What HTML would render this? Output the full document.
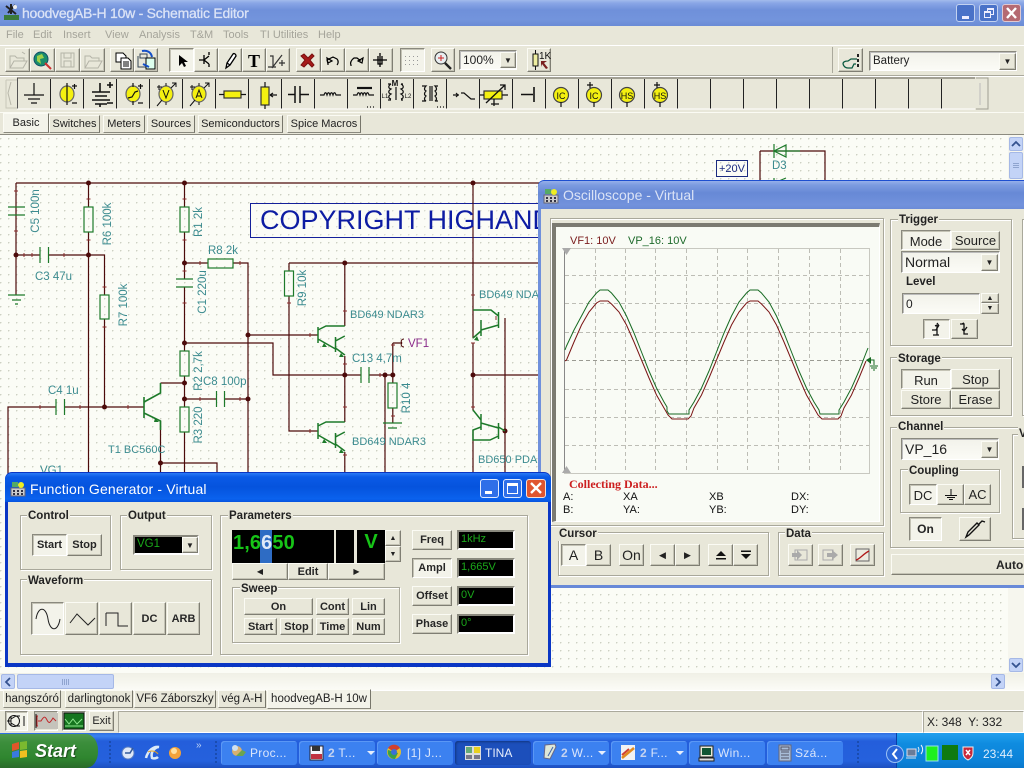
<!DOCTYPE html>
<html><head><meta charset="utf-8"><title>Schematic Editor</title>
<style>
html,body{margin:0;padding:0;width:1024px;height:768px;overflow:hidden;background:#e8e7d9}
body{position:relative;font:12px "Liberation Sans",sans-serif;color:#111}
div,span{position:absolute;box-sizing:border-box}
svg{position:absolute;overflow:visible}
svg text{font-family:"Liberation Sans",sans-serif}
.b{background:#e8e7d9;border:1px solid;border-color:#fbfbf4 #7f7e73 #7f7e73 #fbfbf4;box-shadow:inset -1px -1px 0 #c4c3b5;display:flex;align-items:center;justify-content:center;white-space:nowrap;font-size:12px;color:#222}
.p{background:#f3f3ea;border-color:#8a897e #fff #fff #8a897e;box-shadow:inset 1px 1px 0 #c4c3b5}
.bd{font-weight:bold;font-size:11px;color:#262626}
.g{border:1px solid #a9a89b;box-shadow:1px 1px 0 #fff,inset 1px 1px 0 #fff}
.l{background:#e8e7d9;font-weight:bold;font-size:11.5px;padding:0 1px;line-height:14px;white-space:nowrap;color:#222}
.m{color:#a5a49a;font-size:11px;top:28px;line-height:14px;white-space:nowrap}
.t{background:#e8e7d9;border:1px solid;border-color:#fbfbf4 #77766b #8a897e #fbfbf4;display:flex;align-items:center;justify-content:center;white-space:nowrap;font-size:11px;height:20px;color:#222}
.d{background:#000;border:2px solid;border-color:#8a897e #fff #fff #8a897e;color:#1aa81a;font-size:11px;line-height:15px;padding-left:2px;white-space:nowrap}
.c{background:linear-gradient(#f2f2ea,#fbfbf6);border:1px solid;border-color:#8a897e #fff #fff #8a897e;box-shadow:inset 1px 1px 0 #bbb;font-size:14px;padding-left:3px;white-space:nowrap;display:flex;align-items:center;color:#222}
.tb{height:24px;top:741px;background:#3c81f0;border-radius:3px;color:#dbe6fb;font-size:12px;line-height:24px;white-space:nowrap;box-shadow:inset 1px 1px 0 #5a97f5;letter-spacing:.3px}
.sc{background:#c3d3f7;border:1px solid #a5b8e6;border-radius:2px;display:flex;align-items:center;justify-content:center}
</style></head><body>

<!-- title bar -->
<div style="left:0;top:0;width:1024px;height:26px;background:linear-gradient(#a3bbec 0,#8aa6e6 3px,#6f90da 10px,#7394dc 20px,#6a8bd6 26px)"></div>
<svg style="left:3px;top:3px" width="18" height="18" viewBox="0 0 18 18"><rect x="1" y="12" width="15" height="5" fill="#3a7a3a"/><path d="M3 3l10 8M12 2L5 10M8 1v10" stroke="#222" stroke-width="2" fill="none"/><circle cx="12" cy="4" r="2" fill="#eee"/></svg>
<div style="left:22px;top:5px;color:#dbe3f6;font-size:14px;letter-spacing:-.25px;line-height:17px;white-space:nowrap;-webkit-text-stroke:.3px #dbe3f6">hoodvegAB-H 10w - Schematic Editor</div>
<div style="left:956px;top:4px;width:19px;height:18px;border-radius:3px;background:#4a72c8;border:1px solid #c3d2f0"><span style="left:5px;top:11px;width:7px;height:3px;background:#eef"></span></div>
<div style="left:979px;top:4px;width:19px;height:18px;border-radius:3px;background:#4a72c8;border:1px solid #c3d2f0"><span style="left:7px;top:3px;width:7px;height:7px;border:1px solid #eef;border-top-width:2px"></span><span style="left:4px;top:6px;width:7px;height:7px;border:1px solid #eef;border-top-width:2px;background:#4a72c8"></span></div>
<div style="left:1002px;top:4px;width:19px;height:18px;border-radius:3px;background:#b56a72;border:1px solid #e0c8d0"><svg width="17" height="16"><path d="M4 3l9 10M13 3l-9 10" stroke="#fff" stroke-width="2.4"/></svg></div>

<!-- menu -->
<span class="m" style="left:6px">File</span><span class="m" style="left:33px">Edit</span><span class="m" style="left:63px">Insert</span><span class="m" style="left:105px">View</span><span class="m" style="left:139px">Analysis</span><span class="m" style="left:190px">T&amp;M</span><span class="m" style="left:223px">Tools</span><span class="m" style="left:260px">TI Utilities</span><span class="m" style="left:318px">Help</span>
<div style="left:0;top:45px;width:1024px;height:1px;background:#fff"></div>
<div style="left:0;top:75px;width:1024px;height:1px;background:#aaa99c"></div>
<div style="left:0;top:76px;width:1024px;height:1px;background:#fff"></div>
<div style="left:0;top:112px;width:1024px;height:1px;background:#fbfbf4"></div>
<div style="left:0;top:134px;width:1024px;height:1px;background:#8c8b80"></div>

<!-- toolbar 1 buttons -->
<div class="b" style="left:5px;top:48px;width:25px;height:24px"></div><div class="b" style="left:30px;top:48px;width:25px;height:24px"></div><div class="b" style="left:55px;top:48px;width:25px;height:24px"></div><div class="b" style="left:80px;top:48px;width:25px;height:24px"></div>
<div class="b" style="left:110px;top:48px;width:24px;height:24px"></div><div class="b" style="left:134px;top:48px;width:24px;height:24px"></div>
<div class="b p" style="left:169px;top:48px;width:25px;height:24px"></div><div class="b" style="left:194px;top:48px;width:24px;height:24px"></div><div class="b" style="left:218px;top:48px;width:24px;height:24px"></div><div class="b" style="left:242px;top:48px;width:24px;height:24px"></div><div class="b" style="left:266px;top:48px;width:24px;height:24px"></div>
<div class="b" style="left:296px;top:48px;width:25px;height:24px"></div><div class="b" style="left:321px;top:48px;width:24px;height:24px"></div><div class="b" style="left:345px;top:48px;width:24px;height:24px"></div><div class="b" style="left:369px;top:48px;width:24px;height:24px"></div>
<div class="b p" style="left:400px;top:48px;width:25px;height:24px"></div>
<div class="b" style="left:431px;top:48px;width:24px;height:24px"></div>
<div class="c" style="left:459px;top:50px;width:58px;height:20px;font-size:12px">100%</div>
<div class="b" style="left:500px;top:52px;width:16px;height:16px;font-size:8px">&#9660;</div>
<div class="b" style="left:527px;top:48px;width:24px;height:24px"></div>
<div style="left:832px;top:47px;width:1px;height:26px;background:#aaa99c"></div>
<div class="b" style="left:838px;top:48px;width:25px;height:24px"></div>
<div class="c" style="left:869px;top:51px;width:148px;height:20px;font-size:11.5px">Battery</div>
<div class="b" style="left:999px;top:53px;width:17px;height:17px;font-size:8px">&#9660;</div>

<!-- toolbar 1 & 2 icons -->
<svg style="left:0;top:0" width="1024" height="135" viewBox="0 0 1024 135" fill="none">
<g stroke="#b5b4a8"><path d="M10 68V56h5l2 2h7v3M10 68l4-7h13l-4 7zM22 52l3 2"/><rect x="61" y="53" width="13" height="14"/><rect x="64" y="53" width="7" height="5"/><rect x="64" y="61" width="7" height="6"/><path d="M85 68V56h5l2 2h7v3M85 68l4-7h13l-4 7z"/></g>
<circle cx="41" cy="59" r="7" fill="#1b8d6a" stroke="#0f4f6b"/><path d="M37 56l5-2 2 4-4 1 1 5-4-3zM44 60l2 2" fill="#9fd14a"/><path d="M45 63l6 6" stroke="#c33" stroke-width="2"/>
<g stroke="#000"><path d="M116 53h7l3 3v6h-10z" fill="#fff"/><path d="M121 58h7l3 3v8h-10z" fill="#fff"/><path d="M123 62h6M123 64h6M123 66h6"/>
<path d="M140 54h7v4h-7zM138 56v11h8" stroke="#345"/><rect x="146" y="58" width="9" height="11" fill="#dfe"/></g><path d="M142 51c5-1 9 1 10 6M143 64l6 3" stroke="#1450c8" stroke-width="2"/>
<path d="M179 55v11l3-3 2 4 2-1-2-4h4z" fill="#000"/>
<path d="M199 60h5M204 55v9M204 60l5-4M204 60l5 4M209 52v3M209 64v3" stroke="#000" stroke-width="1.3"/>
<path d="M226 68l1-5 6-9c1-1 3 0 3 2l-6 9zM227 63l3 2" stroke="#000" stroke-width="1.3" fill="#fff"/>
<text x="254" y="67" text-anchor="middle" style="font:bold 18px 'Liberation Serif',serif" fill="#000">T</text>
<path d="M270 56h3v11M268 67h8M272 68l10-13M279 63h6M282 60v6" stroke="#333" stroke-width="1.2"/>
<path d="M304 54l4 4 4-4 2 2-4 4 4 5-2 2-4-4-4 4-3-2 4-5-4-4z" fill="#a61a1a" stroke="#7a1010"/>
<path d="M328 65v-1l-1-4 6-3 4 2c2 2 1 5 0 6M327 58l1 5 4-2z" stroke="#000" stroke-width="1.2"/>
<path d="M351 66v-1c-1-2 0-5 3-7h3l4 3M363 58l-1 5-4-2z" stroke="#000" stroke-width="1.2"/>
<path d="M373 60h14M378 56v8h4v-8M380 53v14" stroke="#000" stroke-width="1.3"/>
<g fill="#999"><path d="M405 56h1v1h-1zM409 56h1v1h-1zM413 56h1v1h-1zM417 56h1v1h-1zM405 60h1v1h-1zM409 60h1v1h-1zM413 60h1v1h-1zM417 60h1v1h-1zM405 64h1v1h-1zM409 64h1v1h-1zM413 64h1v1h-1zM417 64h1v1h-1z"/></g>
<circle cx="441" cy="58" r="6" fill="#e8eef0" stroke="#333"/><path d="M438 58h6M441 55v6" stroke="#c22"/><path d="M445 63l6 6" stroke="#222" stroke-width="2.4"/>
<rect x="533" y="54" width="5" height="12" fill="#eeeea0" stroke="#111"/><path d="M535.500 50v4M535.500 66v4" stroke="#111"/><text x="539" y="59" style="font-size:10px" fill="#111">1K</text><path d="M541 61h6l-3 2 4 5-2 1-4-5-1 3z" fill="#7a1f1f"/>
<path d="M843 64c0-2 2-3 5-3l3-2h6M843 64c1 3 3 4 5 4h4l2-4h2" stroke="#0b5a40" stroke-width="1.3"/><path d="M858 54v3M858 59v3M858 64v3" stroke="#222" stroke-width="2"/>

<!-- toolbar 2 frame -->
<path d="M17 78H975" stroke="#8a897e" stroke-width="1.500"/>
<path d="M17.500 78v31" stroke="#555"/>
<path d="M11 82l-3 11 3 12" stroke="#b8b7aa"/><path d="M6 80h11M6 80v28h11" stroke="#c8c7b9"/>
<g stroke="#222"><path d="M50.500 79v30M83.500 79v30M116.500 79v30M149.500 79v30M182.500 79v30M215.500 79v30M248.500 79v30M281.500 79v30M314.500 79v30M347.500 79v30M380.500 79v30M413.500 79v30M446.500 79v30M479.500 79v30M512.500 79v30M545.500 79v30M578.500 79v30M611.500 79v30M644.500 79v30M677.500 79v30M710.500 79v30M743.500 79v30M776.500 79v30M809.500 79v30M842.500 79v30M875.500 79v30M908.500 79v30M941.500 79v30"/></g>
<path d="M976 78h12v31h-12" stroke="#a09f92"/><path d="M980 83v22" stroke="#bbb"/>
<path d="M17 109H975" stroke="#fff"/>

<g stroke="#111" stroke-width="1.2">
<path d="M34 83v12M24 95h20M28 99h12M31 103h6"/>
<ellipse cx="67" cy="94" rx="7" ry="8" fill="#f4f010" stroke="#666"/><path d="M67 83v22M72 86h5M74.500 84v5M72 103h5"/>
<path d="M100 83v9M92 92h18M95 96h12M92 100h18M95 104h12M100 104v3M107 85h6M110 82v6M107 103h6" stroke-width="1.6"/>
<ellipse cx="133" cy="94" rx="7" ry="8" fill="#f4f010" stroke="#666"/><path d="M133 83v4M133 101v4M128 98l4-1 3-5 3-1M138 86h5M140.500 84v5M138 103h5"/>
<ellipse cx="166" cy="94" rx="7" ry="8" fill="#f4f010" stroke="#666"/><path d="M163 90l3 8 3-8M159 85v5M157 87h5M166 83v3M166 102v3M171 88l5-5M172 83h4v4M157 106l5-6" stroke-width="1"/>
<ellipse cx="199" cy="94" rx="7" ry="8" fill="#f4f010" stroke="#666"/><path d="M196 98l3-8 3 8M197 96h4M192 85v5M190 87h5M199 83v3M199 102v3M204 88l5-5M205 83h4v4M190 106l5-6" stroke-width="1"/>
<rect x="224" y="91" width="17" height="7" fill="#f4f010" stroke="#333"/><path d="M219 94.500h5M241 94.500h5"/>
<rect x="261" y="87" width="8" height="18" fill="#f4f010" stroke="#333"/><path d="M265 82v5M265 105v4M270 95h7M270 95l3-2M270 95l3 2"/>
<path d="M288 94.500h7M295 86v17M300 86v17M300 94.500h9" stroke-width="1.500"/>
<path d="M320 95h4c1-3 2-3 3 0 1-3 2-3 3 0 1-3 2-3 3 0 1-3 2-3 3 0h5"/>
<path d="M353 95h4c1-3 2-3 3 0 1-3 2-3 3 0 1-3 2-3 3 0 1-3 2-3 3 0h5" /><path d="M357 88h15" stroke-width="2.200"/><path d="M367 107h1M370 107h1M373 107h1"/>
<path d="M388 84h3M391 84c-3 2-3 4 0 5 -3 2-3 4 0 5-3 2-3 4 0 5M388 100h3M403 84h-2M401 84c3 2 3 4 0 5 3 2 3 4 0 5 3 2 3 4 0 5M403 100h-2M396 87v13"/>
<path d="M422 86h4c-2 2-2 4 0 5-2 2-2 4 0 5-2 2-2 4 0 5h-4M438 86h-3c2 2 2 4 0 5 2 2 2 4 0 5 2 2 2 4 0 5h3M430 86v15M432 86v15"/><path d="M437 107h1M440 107h1M443 107h1"/>
<path d="M453 95h6M456 93l2 2-2 2M461 93h3l7 6h4"/>
<rect x="484" y="91" width="18" height="8" fill="#f4f010" stroke="#333"/><path d="M480 95h4M502 95h6M486 103l19-18M500 85h5v5M494 99v7M491 104h8" stroke-width="1.300"/>
<path d="M521 94.500h12M534 87v15" stroke-width="1.600"/>
<circle cx="561" cy="95" r="7.500" fill="#f4f010" stroke="#444"/><path d="M561 102v5"/>
<circle cx="594" cy="95" r="7.500" fill="#f4f010" stroke="#444"/><path d="M594 102v5M587 85h6M590 82v6"/>
<circle cx="627" cy="95" r="7.500" fill="#f4f010" stroke="#444"/><path d="M627 102v5"/>
<circle cx="660" cy="95" r="7.500" fill="#f4f010" stroke="#444"/><path d="M660 102v5M654 85h6M657 82v6"/>
</g>
<g fill="#111" style="font-size:9px" text-anchor="middle"><text x="561" y="99">IC</text><text x="594" y="99">IC</text><text x="627" y="99">HS</text><text x="660" y="99">HS</text><text x="395" y="86" style="font-weight:bold;font-size:8px">M</text><text x="385" y="98" style="font-size:6px">L1</text><text x="408" y="98" style="font-size:6px">L2</text></g>
</svg>

<!-- tabs row -->
<div class="t" style="left:3px;top:113px;width:46px;height:20px;background:#f3f3ea">Basic</div>
<div class="t" style="left:49px;top:115px;width:51px;height:18px">Switches</div>
<div class="t" style="left:103px;top:115px;width:42px;height:18px">Meters</div>
<div class="t" style="left:147px;top:115px;width:48px;height:18px">Sources</div>
<div class="t" style="left:198px;top:115px;width:85px;height:18px">Semiconductors</div>
<div class="t" style="left:287px;top:115px;width:74px;height:18px">Spice Macros</div>

<!-- canvas -->
<div style="left:0;top:135px;width:1008px;height:538px;background-color:#fbfcf6;background-image:radial-gradient(circle at .6px .6px,#cdd0c3 .7px,transparent 1px);background-size:8px 8px;background-position:0 3px"></div>

<svg style="left:0;top:0" width="1024" height="768" viewBox="0 0 1024 768" fill="none">
<g stroke="#4c0b0b" stroke-width="1.200">
<path d="M16 183H540M16 183V295M16 255H40M48.500 255H104.500V295M88.500 183V207M88.500 232V480M104.500 319V407"/>
<path d="M8 480V407H56M64.500 407H144"/>
<path d="M184.500 183V207M184.500 232V279M184.500 287V351M184.500 376V407M184.500 432V480M184.500 263H208M233 263H248V480"/>
<path d="M184.500 399H216.500M224.500 399H248M160.500 383H184.500M184.500 343H273V375H361"/>
<path d="M248 335H318M289 263H540M289 263V271M289 296V431H318"/>
<path d="M344.800 263V326M344.800 356V422M344.800 452V480M369 375H392.800M392.800 343V383M392.800 408V423M385 375V480M392.800 343H402"/>
<path d="M473 183V338M473 375H540M473 343V410M473 430V480M505 318V480M160.500 421V463H217V480M160.500 463V480"/>
<path d="M760 151H825V185M760 151V185"/>
</g>
<g fill="#4c0b0b"><circle cx="88.500" cy="183" r="2.500"/><circle cx="184.500" cy="183" r="2.500"/><circle cx="473" cy="183" r="2.500"/><circle cx="16" cy="255" r="2.500"/><circle cx="88.500" cy="255" r="2.500"/><circle cx="184.500" cy="263" r="2.500"/><circle cx="344.800" cy="263" r="2.500"/><circle cx="248" cy="335" r="2.500"/><circle cx="184.500" cy="343" r="2.500"/><circle cx="344.800" cy="375" r="2.500"/><circle cx="385" cy="375" r="2.500"/><circle cx="392.800" cy="375" r="2.500"/><circle cx="473" cy="375" r="2.500"/><circle cx="184.500" cy="383" r="2.500"/><circle cx="184.500" cy="399" r="2.500"/><circle cx="248" cy="399" r="2.500"/><circle cx="104.500" cy="407" r="2.500"/><circle cx="505" cy="431" r="2.500"/><circle cx="160.500" cy="463" r="2.500"/></g>
<g stroke="#8a2a2a" stroke-width="1"><path d="M14 191h4M14 231h4M86.500 199h4M86.500 240h4M182.500 199h4M182.500 240h4M102.500 287h4M102.500 327h4M182.500 271h4M182.500 303h4M287 271h4M287 303h4M343 311h4M343 364h4M343 407h4M343 455h4M391 345h4M391 416h4M471 295h4M471 343h4M471 407h4M24 253v4M32 253v4M64 253v4M200 261v4M240 261v4M40 405v4M80 405v4M128 405v4M200 397v4M240 397v4M310 333v4M310 429v4M496 316v4M380 373v4"/></g>
<g stroke="#1d7a2a" stroke-width="1.200"><path d="M8 207H25M8 215H25M40 247V263M48.500 247V263"/>
<rect x="84" y="207" width="9" height="25"/><rect x="100" y="295" width="9" height="24"/><rect x="180" y="207" width="9" height="25"/><rect x="208" y="259" width="25" height="9"/><rect x="180" y="351" width="9" height="25"/><rect x="180" y="407" width="9" height="25"/><rect x="284.500" y="271" width="9" height="25"/><rect x="388" y="383" width="9" height="25"/>
<path d="M176 279H193M176 287H193M216.500 391V407M224.500 391V407M56 399V415M64.500 399V415M361 367V383M369 367V383M8 295H25M12 300H21M15 304H18M383 423H402M388 428H397"/>
<path d="M144 397V418M144 402L160.500 393V383M144 413L160.500 421V430" stroke-width="1.600"/>
<path d="M318 327V343M318 330L326 326H344.800M318 339L335.500 349M335.500 337V352M335.500 341L344.800 336M335.500 348L344.800 355" stroke-width="1.500"/>
<path d="M318 423V439M318 426L326 422H344.800M318 435L335.500 445M335.500 433V448M335.500 437L344.800 432M335.500 444L344.800 451" stroke-width="1.500"/>
<path d="M498.500 312V328M481 320V336M498.500 316L491 310H473M498.500 325L481 330M481 331L473 338" stroke-width="1.500"/>
<path d="M481 414V430M498.500 423V439M473 410L481 420M481 423L498.500 428M481 427L473 430V440H490L498.500 436M498.500 427L505 431" stroke-width="1.500"/>
<path d="M774 151H800M774 144V158M786 145V157L774 151Z"/>
<path d="M774 183V178M786 178L774 183"/>
</g>
<path d="M155 418l4 4-5 0zM324 343l3 4-5 0zM341 353l3 4-5 0zM324 439l3 4-5 0zM341 449l3 4-5 0zM477 336l-3 4 5 1z" fill="#1d7a2a"/>
<path d="M402 343c-2-2 0-4 2-4M402 343c-2 2 0 4 2 4" stroke="#4c0b0b"/>
<rect x="250.500" y="203.500" width="300" height="34" stroke="#14209a" fill="#fbfcf6" fill-opacity=".3"/>
<path d="M473 203V238" stroke="#4c0b0b"/>
<text x="260" y="229" style="font-size:27px" fill="#0d1ca3" xml:space="preserve">COPYRIGHT HIGHAND</text>
<rect x="716.500" y="160.500" width="31" height="16" stroke="#1a2a80"/>
<text x="732" y="172" text-anchor="middle" style="font-size:11px" fill="#1a2a80">+20V</text>
<g fill="#3b8b8f" style="font-size:11.500px">
<text x="772" y="169">D3</text>
<text transform="translate(39 211) rotate(-90)" text-anchor="middle">C5 100n</text>
<text transform="translate(111 224) rotate(-90)" text-anchor="middle">R6 100k</text>
<text x="35" y="280">C3 47u</text>
<text transform="translate(127 305) rotate(-90)" text-anchor="middle">R7 100k</text>
<text transform="translate(202 222) rotate(-90)" text-anchor="middle">R1 2k</text>
<text x="208" y="254">R8 2k</text>
<text transform="translate(206 292) rotate(-90)" text-anchor="middle">C1 220u</text>
<text transform="translate(306 288) rotate(-90)" text-anchor="middle">R9 10k</text>
<text x="350" y="318" style="font-size:11px">BD649 NDAR3</text>
<text x="352" y="362">C13 4,7m</text>
<text transform="translate(202 371) rotate(-90)" text-anchor="middle">R2 2,7k</text>
<text x="203" y="385">C8 100p</text>
<text x="48" y="394">C4 1u</text>
<text transform="translate(202 425) rotate(-90)" text-anchor="middle">R3 220</text>
<text transform="translate(410 398) rotate(-90)" text-anchor="middle">R10 4</text>
<text x="352" y="445" style="font-size:11px">BD649 NDAR3</text>
<text x="479" y="298" style="font-size:11px">BD649 NDAR3</text>
<text x="478" y="463" style="font-size:11px">BD650 PDAR3</text>
<text x="108" y="453" style="font-size:11px">T1 BC560C</text>
<text x="40" y="474">VG1</text>
</g>
<text x="408" y="347" fill="#8b2b8b" style="font-size:11.500px">VF1</text>
</svg>

<!-- vertical scroll -->
<div style="left:1008px;top:135px;width:16px;height:538px;background:#f6f6ee"></div>
<div class="sc" style="left:1009px;top:137px;width:14px;height:14px"><svg width="10" height="8" fill="none" stroke="#34528f" stroke-width="1.800"><path d="M1 6l4-4 4 4"/></svg></div>
<div class="sc" style="left:1009px;top:152px;width:14px;height:27px"><svg width="8" height="8" fill="none" stroke="#8fa4cf"><path d="M1 1.500h6M1 3.500h6M1 5.500h6"/></svg></div>
<div class="sc" style="left:1009px;top:658px;width:14px;height:14px"><svg width="10" height="8" fill="none" stroke="#34528f" stroke-width="1.800"><path d="M1 2l4 4 4-4"/></svg></div>

<!-- horizontal scroll -->
<div style="left:0;top:673px;width:1024px;height:17px;background:linear-gradient(#f0f0e6,#fbfbf6)"></div>
<div class="sc" style="left:1px;top:674px;width:14px;height:15px"><svg width="8" height="10" fill="none" stroke="#34528f" stroke-width="1.800"><path d="M6 1L2 5l4 4"/></svg></div>
<div class="sc" style="left:17px;top:674px;width:97px;height:15px"><svg width="10" height="8" fill="none" stroke="#8fa4cf"><path d="M1.500 1v6M3.500 1v6M5.500 1v6M7.500 1v6"/></svg></div>
<div class="sc" style="left:991px;top:674px;width:14px;height:15px"><svg width="8" height="10" fill="none" stroke="#34528f" stroke-width="1.800"><path d="M2 1l4 4-4 4"/></svg></div>

<!-- bottom tabs -->
<div style="left:0;top:690px;width:1024px;height:20px;background:#e8e7d9;border-top:1px solid #fff"></div>
<div class="t" style="left:3px;top:690px;width:58px;height:18px;font-size:11.500px">hangszóró</div>
<div class="t" style="left:65px;top:690px;width:68px;height:18px;font-size:11.500px">darlingtonok</div>
<div class="t" style="left:134px;top:690px;width:82px;height:18px;font-size:11.500px">VF6 Záborszky</div>
<div class="t" style="left:218px;top:690px;width:48px;height:18px;font-size:11.500px">vég A-H</div>
<div class="t" style="left:267px;top:689px;width:104px;height:20px;background:#f3f3ea;font-size:11.500px">hoodvegAB-H 10w</div>

<!-- status -->
<div style="left:0;top:710px;width:1024px;height:23px;background:#e8e7d9;border-top:1px solid #fff"></div>
<div class="b p" style="left:5px;top:711px;width:23px;height:20px"></div>
<div class="b p" style="left:34px;top:711px;width:24px;height:20px;background:#e8e7d9"></div>
<div class="b p" style="left:62px;top:711px;width:24px;height:20px;background:#e8e7d9"></div>
<div class="b" style="left:89px;top:711px;width:25px;height:20px;font-size:11px">Exit</div>
<div style="left:118px;top:711px;width:805px;height:22px;border:1px solid;border-color:#aaa99c #fff #fff #aaa99c"></div>
<div style="left:923px;top:711px;width:101px;height:22px;border:1px solid;border-color:#aaa99c #fff #fff #aaa99c;padding:3px 0 0 3px;font-size:12px;white-space:nowrap;color:#222">X: 348&nbsp; Y: 332</div>
<svg style="left:0;top:0" width="120" height="768" viewBox="0 0 120 768" fill="none">
<circle cx="14" cy="721" r="5.500" stroke="#111"/><path d="M7 721h4M11 716v10M11 719l5-3h4M11 723l5 3h4M24 716v10" stroke="#111"/>
<rect x="36" y="713" width="22" height="16" fill="#c5c3bb"/><path d="M38 716h-1v10h1M38 721h3c3-5 4-5 6-1s3 3 6-2l3 3" stroke="#c0282a"/><path d="M36 714v14" stroke="#111"/>
<rect x="64" y="713" width="20" height="16" fill="#15751f" stroke="#111"/><path d="M65 719l4 5 4-5 4 5 5-5M65 726h18" stroke="#8fe88f"/>
</svg>

<!-- taskbar -->
<div style="left:0;top:733px;width:1024px;height:35px;background:linear-gradient(#2f6ee0 0,#3a82f0 3px,#245edb 8px,#2561dd 28px,#1d4fbf 35px)"></div>
<div style="left:0;top:734px;width:98px;height:34px;background:linear-gradient(#4f9a4f,#3c8e3c 25%,#2f862f 70%,#2a6a2a);border-radius:0 12px 12px 0/0 16px 16px 0"></div>
<svg style="left:0;top:0" width="220" height="768" viewBox="0 0 220 768" fill="none">
<path d="M12 744l7-2v7l-7 2z" fill="#e0562a"/><path d="M20 742l7-1v8l-7 1z" fill="#7ab92f"/><path d="M12 752l7-2v7l-7 1z" fill="#3a7adf"/><path d="M20 751l7-1v7l-7 1z" fill="#f0c020"/>
<circle cx="128" cy="753" r="6" fill="#dfe8f8" stroke="#5b7ec0"/><path d="M125 753h5l3-5" stroke="#345a9a" stroke-width="1.500"/>
<path d="M146 758c2-8 8-12 13-11-3 0-9 4-7 11 2 1 5 0 6-1" stroke="#dceaf8" stroke-width="2.500"/><path d="M148 752c3-2 8-1 10 2" stroke="#e5a020"/>
<circle cx="175" cy="753" r="6" fill="#f3a23a"/><circle cx="174" cy="751" r="3" fill="#ffe0a0"/>
<path d="M110 741v22M216 741v22" stroke="#1a4cb0" stroke-width="2" stroke-dasharray="2 2"/>
</svg>
<div style="left:35px;top:738px;color:#fff;font:italic bold 18px 'Liberation Sans',sans-serif;line-height:26px;text-shadow:1px 1px 1px #1d4d1d">Start</div>
<div style="left:196px;top:740px;color:#c0d4f4;font-size:10px">&#187;</div>

<div class="tb" style="left:221px;width:76px;padding-left:29px">Proc...</div>
<div class="tb" style="left:299px;width:76px;padding-left:29px"><b style="color:#c6d4f0">2</b> T...&nbsp;</div>
<div class="tb" style="left:377px;width:76px;padding-left:30px">[1] J...</div>
<div class="tb" style="left:455px;width:76px;padding-left:30px;background:#1c4fbb;box-shadow:inset 1px 1px 2px #12357f;color:#e8eefc;letter-spacing:0">TINA</div>
<div class="tb" style="left:533px;width:76px;padding-left:28px"><b style="color:#c6d4f0">2</b> W...</div>
<div class="tb" style="left:611px;width:76px;padding-left:29px"><b style="color:#c6d4f0">2</b> F...</div>
<div class="tb" style="left:689px;width:76px;padding-left:29px">Win...</div>
<div class="tb" style="left:767px;width:76px;padding-left:28px">Szá...</div>
<svg style="left:0;top:0" width="1024" height="768" viewBox="0 0 1024 768" fill="none">
<circle cx="237" cy="751" r="5" fill="#d8b070"/><path d="M236 756l6-6 4 2-3 4z" fill="#6ca44f"/><circle cx="235" cy="748" r="3" fill="#cfe0f0"/>
<rect x="310" y="746" width="13" height="14" fill="#f4f4fa" stroke="#223"/><rect x="312" y="746" width="8" height="5" fill="#333"/><rect x="311" y="754" width="11" height="5" fill="#c03040"/>
<path d="M367 751l4 4 4-4z" fill="#e6eefc"/>
<circle cx="394" cy="752" r="7" fill="#e0c030"/><path d="M394 752l6-4a7 7 0 0 0-12 0z" fill="#d04030"/><path d="M388 750a7 7 0 0 0 7 9l3-6z" fill="#3aa04a"/><circle cx="394" cy="752" r="3" fill="#3a70d8"/>
<rect x="465" y="746" width="16" height="14" fill="#ddd"/><path d="M466 747h6v6h-6z" fill="#6a7"/><rect x="474" y="747" width="6" height="6" fill="#e8d020"/><path d="M466 755h6v4h-6zM474 755h6v4h-6z" fill="#778"/>
<path d="M545 745l10-1 1 3-6 12-6-1z" fill="#dfe8d8" stroke="#668"/><path d="M548 756l5-9" stroke="#46a"/>
<path d="M621 745h14v15h-14z" fill="#f2f2f2"/><path d="M622 758l12-10" stroke="#e08a20" stroke-width="2.500"/>
<path d="M622 755l7-6" stroke="#d04030" stroke-width="2"/>
<path d="M676 751l4 4 4-4zM598 751l4 4 4-4z" fill="#e6eefc"/>
<rect x="700" y="746" width="13" height="11" fill="#e8e8d8" stroke="#222"/><rect x="702" y="748" width="9" height="7" fill="#153"/><path d="M699 758h15v3h-15z" fill="#ddd" stroke="#222"/>
<rect x="779" y="745" width="12" height="16" fill="#a8bcd8" stroke="#667"/><path d="M781 747h8v3h-8zM781 752h8M781 755h8M781 758h8" stroke="#556"/>
<path d="M858 741v22" stroke="#1a4cb0" stroke-width="2" stroke-dasharray="2 2"/>
</svg>
<div style="left:896px;top:733px;width:128px;height:35px;background:linear-gradient(#22a0ee,#0f8ce0 30%,#0c82d8 80%,#0a78cc);border-left:1px solid #0a3fa8"></div>
<svg style="left:0;top:0" width="1024" height="768" viewBox="0 0 1024 768" fill="none">
<circle cx="895" cy="754" r="8.500" fill="#2a66d8" stroke="#9cc2f5"/><path d="M897 749l-4 5 4 5" stroke="#fff" stroke-width="2"/>
<rect x="907" y="749" width="9" height="7" fill="#6a7c98" stroke="#dde"/><path d="M906 758h10" stroke="#d8e0ea"/><path d="M918 747a4 4 0 0 1 0 5M921 745a7 7 0 0 1 0 9" stroke="#e8f2fc"/>
<rect x="926" y="746" width="12" height="15" fill="#1ef01e" stroke="#9de"/>
<rect x="942" y="745" width="16" height="15" fill="#0f7a0f"/>
<path d="M963 747h10v6c0 4-3 6-5 7-2-1-5-3-5-7z" fill="#c8283a" stroke="#eee"/><path d="M966 750l4 5M970 750l-4 5" stroke="#fff" stroke-width="1.500"/>
</svg>
<div style="left:983px;top:747px;color:#dfeefc;font-size:12px;line-height:15px">23:44</div>

<!-- oscilloscope window -->
<div style="left:538px;top:180px;width:486px;height:408px;background:#1e4fd0;border-radius:6px 0 0 0"></div>
<div style="left:538px;top:181px;width:486px;height:28px;border-radius:6px 0 0 0;background:linear-gradient(#96b0ea 0,#7c9be0 4px,#6789d6 12px,#7292dc 24px,#6c8cd8 28px)"></div>
<div style="left:538px;top:209px;width:3px;height:376px;background:#6f90dc"></div>
<div style="left:541px;top:209px;width:483px;height:376px;background:#e8e7d9"></div>
<div style="left:538px;top:585px;width:486px;height:3px;background:#6889d8"></div>
<svg style="left:543px;top:188px" width="16" height="16"><rect x="1" y="7" width="14" height="8" fill="#ccc" stroke="#667"/><rect x="2" y="1" width="6" height="5" fill="#5a6"/><circle cx="11" cy="4" r="3" fill="#ee2"/><path d="M3 9h2v2H3zM7 9h2v2H7zM11 9h2v2h-2zM3 12h2v2H3zM7 12h2v2H7zM11 12h2v2h-2z" fill="#334"/></svg>
<div style="left:563px;top:187px;color:#dbe3f6;font-size:14px;line-height:17px;white-space:nowrap">Oscilloscope - Virtual</div>

<div class="g" style="left:550px;top:218px;width:334px;height:308px"></div>
<div style="left:552px;top:223px;width:328px;height:299px;background:#f9fbf5;border:solid;border-width:4px 1px 1px 4px;border-color:#7c7b72 #fff #fff #7c7b72"></div>
<svg style="left:0;top:0" width="1024" height="600" viewBox="0 0 1024 600" fill="none">
<text x="570" y="244" fill="#7a1d1d" style="font-size:11px">VF1: 10V</text>
<text x="628" y="244" fill="#1d6a2a" style="font-size:11px">VP_16: 10V</text>
<rect x="564.500" y="248.500" width="305" height="225" stroke="#c8c8c0"/>
<g stroke="#bdbdb5" stroke-dasharray="4 3">
<path d="M595.500 249v224M625.500 249v224M655.500 249v224M686.500 249v224M717.500 249v224M747.500 249v224M778.500 249v224M809.500 249v224M840.500 249v224"/>
<path d="M565 275.500h304M565 303.500h304M565 332.500h304M565 389.500h304M565 417.500h304M565 445.500h304"/>
<path d="M565 360.500h304" stroke="#9a9a92"/>
</g>
<path d="M564.500 248v225" stroke="#888"/>
<path d="M562 248h9l-4.500 7z" fill="#aaa"/><path d="M562 473h9l-4.500-7z" fill="#aaa"/>
<path d="M565 361L566.500 360 574 342 581.500 325 589 312 596.500 303 600 301 608 301 611.500 304 619 312 626.500 325 634 342 641.500 360 649 378 656.500 395 664 408 668 415 672 419 688 419 691 416 694 408 701.500 395 709 378 716.500 360" stroke="#7a1414"/>
<path d="M716.500 360L724 342 731.500 325 739 312 746.500 303 750 301 758 301 761.500 304 769 312 776.500 325 784 342 791.500 360 799 378 806.500 395 814 408 818 415 822 419 838 419 841 416 844 408 851.500 395 859 378 866 361" stroke="#7a1414"/>
<path d="M565 350L566.500 346 574 330 581.500 316 589 302 596.500 293 600 290 608 290 611.500 293 619 302 626.500 316 634 333 641.500 352 649 371 656.500 388 664 402 667 407 667 411 669 414 689 414 689 410 694 402 701.500 388 709 371 716.500 352 724 333 731.500 316 739 302 746.500 293 750 290 758 290 761.500 293 769 302 776.500 316 784 333 791.500 352 799 371 806.500 388 814 402 819 410 820 414 839 414 839 410 844 402 851.500 388 859 371 866 353 868 348" stroke="#176a22"/>
<path d="M866 360l5-3v7z" fill="#176a22"/><path d="M870 360h4v5M870 366h8M871 368h6M873 370h2" stroke="#176a22"/>
<text x="569" y="488" fill="#cc1f1f" style="font:bold 12px 'Liberation Serif',serif">Collecting Data...</text>
<g fill="#111" style="font:11px 'Liberation Serif',serif"><text x="563" y="500">A:</text><text x="563" y="513">B:</text><text x="623" y="500">XA</text><text x="623" y="513">YA:</text><text x="709" y="500">XB</text><text x="709" y="513">YB:</text><text x="791" y="500">DX:</text><text x="791" y="513">DY:</text></g>
</svg>

<div class="g" style="left:558px;top:532px;width:211px;height:44px"></div><span class="l" style="left:558px;top:527px">Cursor</span>
<div class="g" style="left:778px;top:532px;width:106px;height:44px"></div><span class="l" style="left:785px;top:527px">Data</span>
<div class="b p" style="left:561px;top:544px;width:25px;height:22px;font-size:14px">A</div><div class="b" style="left:586px;top:544px;width:25px;height:22px;font-size:14px">B</div>
<div class="b" style="left:619px;top:544px;width:25px;height:22px;font-size:14px">On</div>
<div class="b" style="left:650px;top:544px;width:25px;height:22px;font-size:9px">&#9664;</div><div class="b" style="left:675px;top:544px;width:25px;height:22px;font-size:9px">&#9654;</div>
<div class="b" style="left:708px;top:544px;width:25px;height:22px"><svg width="12" height="10"><path d="M6 1l5 5H1zM1 8h10v1.500H1z" fill="#111"/></svg></div>
<div class="b" style="left:733px;top:544px;width:25px;height:22px"><svg width="12" height="10"><path d="M6 9l5-5H1zM1 0.500h10V2H1z" fill="#111"/></svg></div>
<div class="b" style="left:788px;top:544px;width:25px;height:22px"><svg width="17" height="14"><rect x="3" y="2" width="12" height="10" fill="none" stroke="#aaa"/><path d="M0 5h5V2l5 5-5 5V9H0z" fill="#aaa"/></svg></div>
<div class="b" style="left:818px;top:544px;width:25px;height:22px"><svg width="17" height="14"><rect x="1" y="2" width="10" height="10" fill="none" stroke="#aaa"/><path d="M5 5h5V2l6 5-6 5V9H5z" fill="#aaa"/></svg></div>
<div class="b" style="left:850px;top:544px;width:25px;height:22px"><svg width="15" height="14"><rect x="1" y="1" width="13" height="12" fill="#ecebe0" stroke="#666"/><path d="M1 12c4-1 7-6 13-9" stroke="#b01818" stroke-width="1.300" fill="none"/></svg></div>

<!-- trigger -->
<div class="g" style="left:890px;top:219px;width:122px;height:127px"></div><span class="l" style="left:898px;top:213px">Trigger</span>
<div class="b p" style="left:901px;top:230px;width:50px;height:20px;font-size:13px;padding-top:2px">Mode</div><div class="b" style="left:951px;top:231px;width:49px;height:19px;font-size:13px">Source</div>
<div class="c" style="left:901px;top:251px;width:99px;height:22px">Normal</div><div class="b" style="left:981px;top:254px;width:17px;height:17px;font-size:8px">&#9660;</div>
<span class="l" style="left:905px;top:275px">Level</span>
<div class="c" style="left:902px;top:293px;width:78px;height:21px;font-size:12px">0</div>
<div class="b" style="left:981px;top:293px;width:18px;height:10px;font-size:7px">&#9650;</div><div class="b" style="left:981px;top:303px;width:18px;height:11px;font-size:7px">&#9660;</div>
<div class="b p" style="left:923px;top:319px;width:27px;height:20px"><svg width="14" height="14" fill="none" stroke="#111" stroke-width="1.300"><path d="M2 8h4l3-5M7 1l2 3M5 4l2-1M7 3v10M3 13h6"/></svg></div>
<div class="b" style="left:951px;top:319px;width:27px;height:20px"><svg width="14" height="14" fill="none" stroke="#111" stroke-width="1.300"><path d="M2 2h4v10h4M4 7l2 2 3-4M4 2l2-1"/></svg></div>
<!-- storage -->
<div class="g" style="left:890px;top:357px;width:122px;height:59px"></div><span class="l" style="left:897px;top:352px">Storage</span>
<div class="b p" style="left:901px;top:369px;width:50px;height:20px;font-size:13px;padding-top:2px">Run</div><div class="b" style="left:951px;top:369px;width:49px;height:20px;font-size:13px">Stop</div>
<div class="b" style="left:901px;top:390px;width:50px;height:19px;font-size:13px">Store</div><div class="b" style="left:951px;top:390px;width:49px;height:19px;font-size:13px">Erase</div>
<div class="g" style="left:1022px;top:219px;width:20px;height:197px"></div>
<!-- channel -->
<div class="g" style="left:890px;top:427px;width:150px;height:121px"></div><span class="l" style="left:897px;top:420px">Channel</span>
<div class="g" style="left:1012px;top:434px;width:30px;height:105px"></div><span class="l" style="left:1018px;top:427px">V</span>
<div class="c" style="left:901px;top:438px;width:98px;height:22px">VP_16</div><div class="b" style="left:981px;top:441px;width:17px;height:17px;font-size:8px">&#9660;</div>
<div class="g" style="left:900px;top:469px;width:100px;height:44px"></div><span class="l" style="left:908px;top:464px">Coupling</span>
<div class="b p" style="left:909px;top:484px;width:28px;height:21px;font-size:13px;padding-top:2px">DC</div>
<div class="b" style="left:937px;top:484px;width:27px;height:21px"><svg width="14" height="12" fill="none" stroke="#111"><path d="M7 0v6M1 6.500h12M3 8.500h8M5 10.500h4"/></svg></div>
<div class="b" style="left:964px;top:484px;width:27px;height:21px;font-size:13px">AC</div>
<div class="b p bd" style="left:909px;top:517px;width:33px;height:24px;font-size:12px">On</div>
<div class="b" style="left:959px;top:517px;width:32px;height:24px"><svg width="22" height="20" fill="none" stroke="#111" stroke-width="1.400"><path d="M2 18l3-2 10-10-2-2L4 13zM15 5l3-3 3 1"/></svg></div>
<div style="left:1022px;top:466px;width:2px;height:22px;background:#666"></div>
<div style="left:1022px;top:508px;width:2px;height:22px;background:#666"></div>
<div class="b bd" style="left:891px;top:554px;width:140px;height:21px;justify-content:flex-start;padding-left:104px;font-size:12px">Auto</div>

<!-- function generator window -->
<div style="left:5px;top:472px;width:546px;height:195px;background:#0a36c4;border-radius:7px 7px 0 0"></div>
<div style="left:5px;top:473px;width:546px;height:29px;border-radius:7px 7px 0 0;background:linear-gradient(#2a7af5 0,#0a5ae6 4px,#0553dd 14px,#0a62ee 26px,#0553dd 29px)"></div>
<div style="left:8px;top:502px;width:540px;height:161px;background:#e8e7d9"></div>
<svg style="left:10px;top:481px" width="16" height="16"><rect x="1" y="7" width="14" height="8" fill="#ccc" stroke="#667"/><rect x="2" y="1" width="6" height="5" fill="#5a6"/><circle cx="11" cy="4" r="3" fill="#ee2"/><path d="M3 9h2v2H3zM7 9h2v2H7zM11 9h2v2h-2zM3 12h2v2H3zM7 12h2v2H7zM11 12h2v2h-2z" fill="#334"/></svg>
<div style="left:30px;top:481px;color:#fff;font-size:14px;line-height:17px;white-space:nowrap;letter-spacing:.15px">Function Generator - Virtual</div>
<div style="left:480px;top:479px;width:19px;height:19px;border-radius:3px;background:#2f6fe8;border:1px solid #e0eaff"><span style="left:4px;top:11px;width:7px;height:3px;background:#fff"></span></div>
<div style="left:503px;top:479px;width:19px;height:19px;border-radius:3px;background:#2f6fe8;border:1px solid #e0eaff"><span style="left:3px;top:3px;width:11px;height:11px;border:1px solid #fff;border-top-width:3px"></span></div>
<div style="left:526px;top:479px;width:20px;height:19px;border-radius:3px;background:#e0552f;border:1px solid #f6e0d6"><svg width="18" height="17"><path d="M4 3l10 10M14 3L4 13" stroke="#fff" stroke-width="2.400"/></svg></div>

<div class="g" style="left:20px;top:515px;width:91px;height:55px"></div><span class="l" style="left:27px;top:509px">Control</span>
<div class="b p bd" style="left:32px;top:534px;width:35px;height:22px">Start</div><div class="b bd" style="left:67px;top:534px;width:35px;height:22px">Stop</div>
<div class="g" style="left:120px;top:515px;width:92px;height:55px"></div><span class="l" style="left:127px;top:509px">Output</span>
<div class="d" style="left:133px;top:535px;width:66px;height:20px;font-size:11.500px">VG1</div><div class="b" style="left:182px;top:537px;width:16px;height:16px;font-size:8px">&#9660;</div>
<div class="g" style="left:20px;top:579px;width:192px;height:76px"></div><span class="l" style="left:27px;top:574px">Waveform</span>
<div class="b p" style="left:31px;top:602px;width:33px;height:33px"><svg width="28" height="20" fill="none" stroke="#222" style="left:2px;top:6px"><path d="M2 10c2-13 10-13 12 0s10 13 12 0"/></svg></div>
<div class="b" style="left:65px;top:602px;width:33px;height:33px"><svg width="28" height="20" fill="none" stroke="#222" style="left:2px;top:6px"><path d="M2 14L9 5 20 16 27 9"/></svg></div>
<div class="b" style="left:99px;top:602px;width:33px;height:33px"><svg width="28" height="20" fill="none" stroke="#222" style="left:2px;top:6px"><path d="M4 4h12v13h10"/><path d="M4 4v13"/></svg></div>
<div class="b bd" style="left:133px;top:602px;width:33px;height:33px">DC</div>
<div class="b bd" style="left:167px;top:602px;width:33px;height:33px">ARB</div>

<div class="g" style="left:220px;top:515px;width:308px;height:140px"></div><span class="l" style="left:228px;top:509px">Parameters</span>
<div style="left:232px;top:530px;width:102px;height:33px;background:#000"></div>
<div style="left:260px;top:530px;width:12px;height:33px;background:#2e6cc4"></div>
<div style="left:233px;top:531px;color:#17c417;font:bold 20px 'Liberation Sans',sans-serif;line-height:24px;white-space:nowrap;letter-spacing:.1px">1,6<span style="position:static;color:#dfe9f8">6</span>50</div>
<div style="left:336px;top:530px;width:18px;height:33px;background:#000"></div>
<div style="left:357px;top:530px;width:28px;height:33px;background:#000;color:#17c417;font:bold 20px 'Liberation Sans',sans-serif;line-height:25px;padding-left:0;text-align:center">V</div>
<div class="b" style="left:385px;top:530px;width:16px;height:16px;font-size:7px">&#9650;</div><div class="b" style="left:385px;top:546px;width:16px;height:16px;font-size:7px">&#9660;</div>
<div class="b" style="left:232px;top:563px;width:56px;height:17px;font-size:8px">&#9664;</div><div class="b bd" style="left:288px;top:563px;width:40px;height:17px">Edit</div><div class="b" style="left:328px;top:563px;width:57px;height:17px;font-size:8px">&#9654;</div>
<div class="g" style="left:232px;top:587px;width:168px;height:56px"></div><span class="l" style="left:240px;top:582px">Sweep</span>
<div class="b bd" style="left:244px;top:598px;width:69px;height:17px">On</div><div class="b bd" style="left:316px;top:598px;width:33px;height:17px">Cont</div><div class="b bd" style="left:352px;top:598px;width:33px;height:17px">Lin</div>
<div class="b bd" style="left:244px;top:618px;width:33px;height:17px">Start</div><div class="b bd" style="left:280px;top:618px;width:33px;height:17px">Stop</div><div class="b bd" style="left:316px;top:618px;width:33px;height:17px">Time</div><div class="b bd" style="left:352px;top:618px;width:33px;height:17px">Num</div>
<div class="b bd" style="left:412px;top:530px;width:40px;height:20px">Freq</div><div class="d" style="left:457px;top:530px;width:58px;height:20px">1kHz</div>
<div class="b p bd" style="left:412px;top:558px;width:40px;height:20px">Ampl</div><div class="d" style="left:457px;top:558px;width:58px;height:20px">1,665V</div>
<div class="b bd" style="left:412px;top:586px;width:40px;height:20px">Offset</div><div class="d" style="left:457px;top:586px;width:58px;height:20px">0V</div>
<div class="b bd" style="left:412px;top:614px;width:40px;height:20px">Phase</div><div class="d" style="left:457px;top:614px;width:58px;height:20px">0°</div>

</body></html>
